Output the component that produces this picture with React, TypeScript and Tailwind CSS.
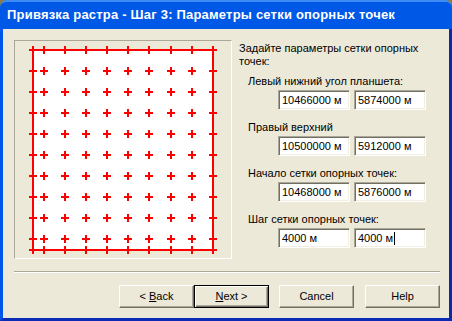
import React from "react";

const FONT = { fontFamily: '"Liberation Sans", Arial, sans-serif' };

const cols = [18, 29, 50, 71, 92, 113, 134, 156, 177, 198];
const rows = [9, 30, 51, 72, 93, 114, 135, 156, 177, 198, 209];

const GridPreview: React.FC = () => (
  <svg width="216" height="217" viewBox="0 0 216 217" shapeRendering="crispEdges">
    <rect x="18" y="9" width="180" height="200" fill="#ffffff" />
    <rect x="17" y="8" width="182" height="2" fill="#ff0000" />
    <rect x="17" y="208" width="182" height="2" fill="#ff0000" />
    <rect x="17" y="8" width="2" height="202" fill="#ff0000" />
    <rect x="197" y="8" width="2" height="202" fill="#ff0000" />
    {rows.map((y) =>
      cols.map((x) => (
        <g key={`${x}-${y}`} fill="#ff0000">
          <rect x={x - 4} y={y - 1} width="8" height="2" />
          <rect x={x - 1} y={y - 4} width="2" height="8" />
        </g>
      ))
    )}
  </svg>
);

const Field: React.FC<{ value: string; caret?: boolean }> = ({ value, caret }) => (
  <div className="w-[72px] h-[20px] bg-white border border-t-[#aca899] border-l-[#aca899] border-b-white border-r-white shadow-[inset_1px_1px_0_#716f64,inset_-1px_-1px_0_#f1efe2] flex items-center pl-[3px] text-[11px] text-black">
    <span>{value}</span>
    {caret && <span className="inline-block w-px h-[13px] bg-black ml-[1px]" />}
  </div>
);

const Group: React.FC<{ label: string; a: string; b: string; caret?: boolean }> = ({
  label,
  a,
  b,
  caret,
}) => (
  <div className="flex flex-col">
    <div className="h-[13px] leading-[13px] pl-[9px] text-[11px] text-black">{label}</div>
    <div className="flex gap-[4px] mt-[2px] pl-[39px]">
      <Field value={a} />
      <Field value={b} caret={caret} />
    </div>
  </div>
);

const WinButton: React.FC<{ children: React.ReactNode; primary?: boolean }> = ({
  children,
  primary,
}) => (
  <button
    className={
      primary
        ? "w-[75px] h-[23px] bg-[#ece9d8] border border-black shadow-[inset_1px_1px_0_#ffffff,inset_-1px_-1px_0_#716f64,inset_-2px_-2px_0_#aca899] text-[11px] text-black"
        : "w-[75px] h-[23px] bg-[#ece9d8] border border-t-white border-l-white border-b-[#716f64] border-r-[#716f64] shadow-[inset_-1px_-1px_0_#aca899] text-[11px] text-black"
    }
  >
    {children}
  </button>
);

export default function App() {
  return (
    <div className="w-[452px] h-[321px] bg-[#8c7b45] flex flex-col" style={FONT}>
      <div className="h-[29px] rounded-t-[7px] bg-[#0058e6] border-t-2 border-[#3d8bf5] flex items-center pl-[7px] pb-[1px]">
        <span className="text-white font-bold text-[13px] tracking-[0.2px]">
          Привязка растра - Шаг 3: Параметры сетки опорных точек
        </span>
      </div>
      <div className="flex-1 bg-[#ece9d8] border-l-[3px] border-l-[#0055ea] border-r-[3px] border-r-[#0a2aa8] border-b-[3px] border-b-[#0a2bb8] flex flex-col">
        <div className="h-[231px] flex items-start">
          <div className="ml-[11px] mt-[11px] w-[218px] h-[219px] border border-t-[#aca899] border-l-[#aca899] border-b-white border-r-white bg-[#ece9d8]">
            <GridPreview />
          </div>
          <div className="ml-[7px] mt-[13px] flex flex-col text-black">
            <div className="text-[11px] leading-[13px] w-[190px]">
              Задайте параметры сетки опорных точек:
            </div>
            <div className="flex flex-col gap-[11px] mt-[7px]">
              <Group label="Левый нижний угол планшета:" a="10466000 м" b="5874000 м" />
              <Group label="Правый верхний" a="10500000 м" b="5912000 м" />
              <Group label="Начало сетки опорных точек:" a="10468000 м" b="5876000 м" />
              <Group label="Шаг сетки опорных точек:" a="4000 м" b="4000 м" caret />
            </div>
          </div>
        </div>
        <div className="ml-[11px] mr-[9px] mt-[11px] h-[2px] border-t border-t-[#aca899] border-b border-b-white" />
        <div className="flex justify-end pr-[9px] mt-[12px]">
          <WinButton>
            &lt; <span className="underline">B</span>ack
          </WinButton>
          <WinButton primary>
            <span className="underline">N</span>ext &gt;
          </WinButton>
          <div className="w-[10px]" />
          <WinButton>Cancel</WinButton>
          <div className="w-[11px]" />
          <WinButton>Help</WinButton>
        </div>
      </div>
    </div>
  );
}
